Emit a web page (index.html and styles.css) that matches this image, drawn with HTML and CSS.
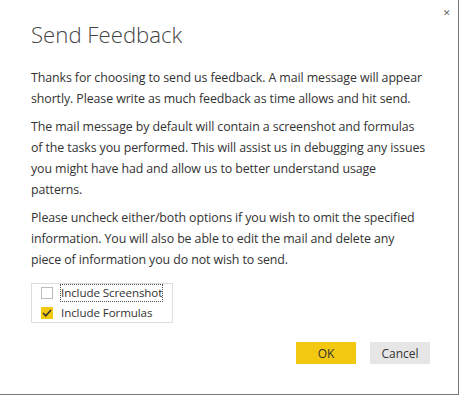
FILE: index.html
```html
<!DOCTYPE html>
<html lang="en">
<head>
    <meta charset="UTF-8">
    <meta name="viewport" content="width=device-width, initial-scale=1.0">
    <title>Send Feedback</title>
    <link rel="stylesheet" href="styles.css">
</head>
<body>
    <div class="dialog">
        <span class="close">&#x2715;</span>
        <h1>Send Feedback</h1>
        <p>Thanks for choosing to send us feedback. A mail message will appear<br>shortly. Please write as much feedback as time allows and hit send.</p>
        <p>The mail message by default will contain a screenshot and formulas<br>of the tasks you performed. This will assist us in debugging any issues<br>you might have had and allow us to better understand usage<br>patterns.</p>
        <p>Please uncheck either/both options if you wish to omit the specified<br>information. You will also be able to edit the mail and delete any<br>piece of information you do not wish to send.</p>
        <div class="options">
            <label class="option">
                <span class="box"></span>
                <span class="text focus">Include Screenshot</span>
            </label>
            <label class="option">
                <span class="box checked">
                    <svg width="10" height="8" viewBox="0 0 10 8"><path d="M1 4 L3.8 6.8 L9 1" fill="none" stroke="#333" stroke-width="1.6"/></svg>
                </span>
                <span class="text">Include Formulas</span>
            </label>
        </div>
        <div class="buttons">
            <button class="ok">OK</button>
            <button class="cancel">Cancel</button>
        </div>
    </div>
</body>
</html>
```

FILE: styles.css
```css
body {
    margin: 0;
    font-family: "Open Sans", sans-serif;
    color: #333;
    background: #fff;
}
.dialog {
    position: relative;
    width: 427px;
    height: 394px;
    border-right: 1px solid #777;
    border-bottom: 1px solid #777;
    padding: 0 0 0 31px;
}
.close {
    position: absolute;
    top: 6px;
    right: 7px;
    font-size: 9px;
    color: #666;
}
h1 {
    margin: 0;
    padding-top: 19px;
    font-weight: 300;
    font-size: 22.2px;
    line-height: 32px;
    color: #444;
}
p {
    margin: 0;
    font-size: 12.4px;
    line-height: 21px;
    letter-spacing: -0.1px;
}
h1 + p {
    margin-top: 16px;
}
p + p {
    margin-top: 7px;
}
.options {
    display: inline-flex;
    flex-direction: column;
    margin-top: 13px;
    padding: 1px 10px 1px 9px;
    border: 1px solid #ddd;
    gap: 4px;
}
.option {
    display: flex;
    align-items: center;
    gap: 8px;
    font-size: 11.6px;
    line-height: 16px;
    letter-spacing: -0.1px;
}
.box {
    width: 10px;
    height: 10px;
    border: 1px solid #bbb;
    display: flex;
    align-items: center;
    justify-content: center;
}
.box.checked {
    background: #f2c811;
    border-color: #f2c811;
}
.focus {
    outline: 1px dotted #555;
}
.buttons {
    display: flex;
    justify-content: flex-end;
    gap: 14px;
    margin-top: 19px;
    padding-right: 28px;
}
button {
    width: 60px;
    height: 22px;
    border: none;
    font-family: "Open Sans", sans-serif;
    font-size: 12px;
    color: #333;
    padding: 0;
}
.ok {
    background: #f2c811;
}
.cancel {
    background: #e6e6e6;
}
```
